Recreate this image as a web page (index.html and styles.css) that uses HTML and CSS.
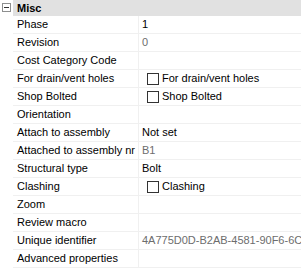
FILE: index.html
```html
<!DOCTYPE html>
<html>
<head>
<meta charset="utf-8">
<link rel="stylesheet" href="styles.css">
</head>
<body>
<div class="grid">
  <div class="hdr">
    <div class="gutter"><span class="toggle"><span class="minus"></span></span></div>
    <div class="hdr-title">Misc</div>
  </div>
  <div class="row"><div class="gutter"></div><div class="name">Phase</div><div class="value">1</div></div>
  <div class="row"><div class="gutter"></div><div class="name">Revision</div><div class="value dim">0</div></div>
  <div class="row"><div class="gutter"></div><div class="name">Cost Category Code</div><div class="value"></div></div>
  <div class="row"><div class="gutter"></div><div class="name">For drain/vent holes</div><div class="value"><span class="cb"></span>For drain/vent holes</div></div>
  <div class="row"><div class="gutter"></div><div class="name">Shop Bolted</div><div class="value"><span class="cb"></span>Shop Bolted</div></div>
  <div class="row"><div class="gutter"></div><div class="name">Orientation</div><div class="value"></div></div>
  <div class="row"><div class="gutter"></div><div class="name">Attach to assembly</div><div class="value">Not set</div></div>
  <div class="row"><div class="gutter"></div><div class="name">Attached to assembly nr</div><div class="value dim">B1</div></div>
  <div class="row"><div class="gutter"></div><div class="name">Structural type</div><div class="value">Bolt</div></div>
  <div class="row"><div class="gutter"></div><div class="name">Clashing</div><div class="value"><span class="cb"></span>Clashing</div></div>
  <div class="row"><div class="gutter"></div><div class="name">Zoom</div><div class="value"></div></div>
  <div class="row"><div class="gutter"></div><div class="name">Review macro</div><div class="value"></div></div>
  <div class="row"><div class="gutter"></div><div class="name">Unique identifier</div><div class="value dim">4A775D0D-B2AB-4581-90F6-6C9D1E2F3A4B</div></div>
  <div class="row"><div class="gutter"></div><div class="name">Advanced properties</div><div class="value"></div></div>
</div>
</body>
</html>
```
FILE: styles.css
```css
html, body {
  margin: 0;
  padding: 0;
  background: #ffffff;
}
body {
  width: 301px;
  height: 268px;
  overflow: hidden;
  font-family: "Liberation Sans", Arial, sans-serif;
  font-size: 11px;
  color: #000000;
}
.grid {
  display: flex;
  flex-direction: column;
  width: 301px;
}
.hdr {
  display: flex;
  height: 16px;
}
.gutter {
  width: 13px;
  flex: none;
  background: #ffffff;
  position: relative;
}
.toggle {
  position: absolute;
  left: 2px;
  top: 3px;
  width: 9px;
  height: 9px;
  box-sizing: border-box;
  border: 1px solid #8e8f8f;
  background: #ffffff;
}
.minus {
  position: absolute;
  left: 1px;
  top: 3px;
  width: 5px;
  height: 1px;
  background: #333333;
}
.hdr-title {
  flex: 1;
  background: #e1e1e1;
  font-weight: bold;
  line-height: 16px;
  padding-left: 4px;
}
.row {
  display: flex;
  height: 18px;
}
.name {
  width: 126px;
  flex: none;
  box-sizing: border-box;
  padding-left: 4px;
  line-height: 17px;
  border-bottom: 1px solid #f0f0f0;
  border-right: 1px solid #f0f0f0;
  white-space: nowrap;
  overflow: hidden;
}
.value {
  flex: 1;
  box-sizing: border-box;
  padding-left: 3px;
  line-height: 17px;
  border-bottom: 1px solid #f0f0f0;
  white-space: nowrap;
  overflow: hidden;
  display: flex;
  align-items: center;
}
.dim {
  color: #6d6d6d;
}
.cb {
  width: 12px;
  height: 12px;
  box-sizing: border-box;
  border: 1px solid #333333;
  margin-left: 5px;
  margin-right: 3px;
  flex: none;
}
```
